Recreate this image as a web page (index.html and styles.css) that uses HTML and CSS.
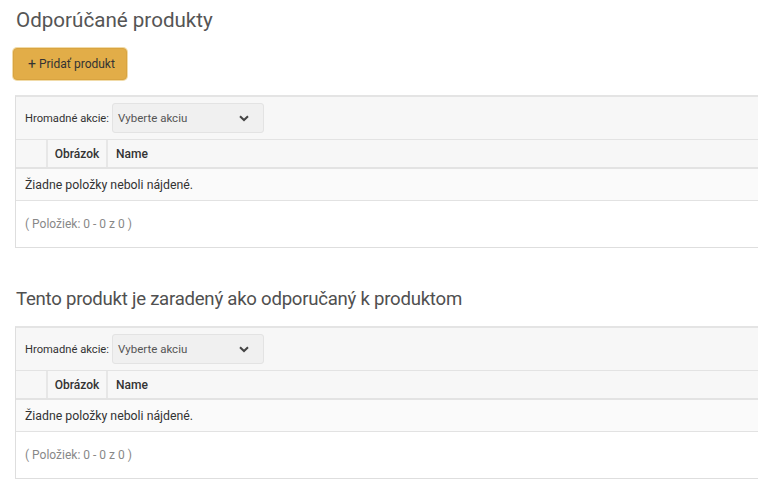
FILE: index.html
```html
<!DOCTYPE html>
<html lang="sk">
<head>
<meta charset="utf-8">
<title>Odporúčané produkty</title>
<link rel="stylesheet" href="styles.css">
</head>
<body>
<div class="page">
  <h2 class="title">Odporúčané produkty</h2>
  <button class="btn-add" type="button"><span class="plus">+</span> Pridať produkt</button>

  <div class="panel">
    <div class="toolbar">
      <label class="bulk-label">Hromadné akcie:</label>
      <div class="select"><span>Vyberte akciu</span>
        <svg class="chev" width="10" height="7" viewBox="0 0 10 7"><path d="M1 1.2 L5 5 L9 1.2" fill="none" stroke="#444" stroke-width="2"/></svg>
      </div>
    </div>
    <div class="row head">
      <div class="cell chk"></div>
      <div class="cell img">Obrázok</div>
      <div class="cell name">Name</div>
    </div>
    <div class="row empty">Žiadne položky neboli nájdené.</div>
    <div class="row foot">( Položiek: 0 - 0 z 0 )</div>
  </div>

  <h2 class="title second">Tento produkt je zaradený ako odporučaný k produktom</h2>

  <div class="panel">
    <div class="toolbar">
      <label class="bulk-label">Hromadné akcie:</label>
      <div class="select"><span>Vyberte akciu</span>
        <svg class="chev" width="10" height="7" viewBox="0 0 10 7"><path d="M1 1.2 L5 5 L9 1.2" fill="none" stroke="#444" stroke-width="2"/></svg>
      </div>
    </div>
    <div class="row head">
      <div class="cell chk"></div>
      <div class="cell img">Obrázok</div>
      <div class="cell name">Name</div>
    </div>
    <div class="row empty">Žiadne položky neboli nájdené.</div>
    <div class="row foot">( Položiek: 0 - 0 z 0 )</div>
  </div>
</div>
</body>
</html>
```
FILE: styles.css
```css
html, body {
  margin: 0;
  padding: 0;
  background: #fff;
  overflow: hidden;
}
body {
  font-family: Roboto, "Liberation Sans", sans-serif;
  color: #333;
}
.page {
  padding: 8px 0 0 15px;
}
.title {
  margin: 0;
  font-size: 20.6px;
  font-weight: 400;
  color: #555;
  line-height: 24px;
  padding-left: 1px;
}
.title.second {
  margin-top: 39px;
  margin-bottom: 15px;
  font-size: 18.6px;
  letter-spacing: -0.25px;
  color: #505050;
}
.btn-add {
  display: flex;
  align-items: center;
  gap: 3px;
  margin: 16px 0 15px -2px;
  height: 32px;
  width: 114px;
  padding: 0 0 0 14px;
  background: #e2ad48;
  border: 1px solid #d9a441;
  border-radius: 4px;
  box-shadow: 0 0 0 1px #f1dba8;
  font-family: Roboto, "Liberation Sans", sans-serif;
  font-size: 12px;
  color: #333;
}
.plus {
  font-size: 14px;
  line-height: 1;
}
.panel {
  margin-right: -20px;
  border: 1px solid #dedede;
  border-top: 2px solid #e4e4e4;
  font-size: 12px;
}
.toolbar {
  display: flex;
  align-items: center;
  gap: 3px;
  height: 42px;
  padding-left: 9px;
  background: #f7f7f7;
  border-bottom: 1px solid #e3e3e3;
}
.bulk-label {
  font-size: 11.2px;
  color: #333;
}
.select {
  display: flex;
  align-items: center;
  justify-content: space-between;
  box-sizing: border-box;
  width: 152px;
  height: 30px;
  padding: 0 14px 0 5px;
  background: #f0f0f0;
  border: 1px solid #e3e3e3;
  border-radius: 3px;
  color: #555;
  font-size: 11.5px;
}
.row {
  display: flex;
  align-items: center;
  box-sizing: border-box;
  border-bottom: 1px solid #e2e2e2;
}
.head {
  height: 29px;
  background: #f7f7f7;
  border-bottom: 2px solid #e3e3e3;
}
.cell {
  height: 100%;
  display: flex;
  align-items: center;
  box-sizing: border-box;
}
.chk {
  width: 32px;
  border-right: 2px solid #e7e7e7;
}
.img {
  width: 60px;
  justify-content: center;
  font-weight: 500;
  border-right: 2px solid #e7e7e7;
}
.name {
  padding-left: 8px;
  font-weight: 500;
}
.empty {
  height: 32px;
  padding-left: 9px;
  background: #fafafa;
  color: #333;
  font-size: 12.3px;
}
.foot {
  height: 46px;
  padding-left: 9px;
  background: #fff;
  color: #888;
  border-bottom: none;
}
```
